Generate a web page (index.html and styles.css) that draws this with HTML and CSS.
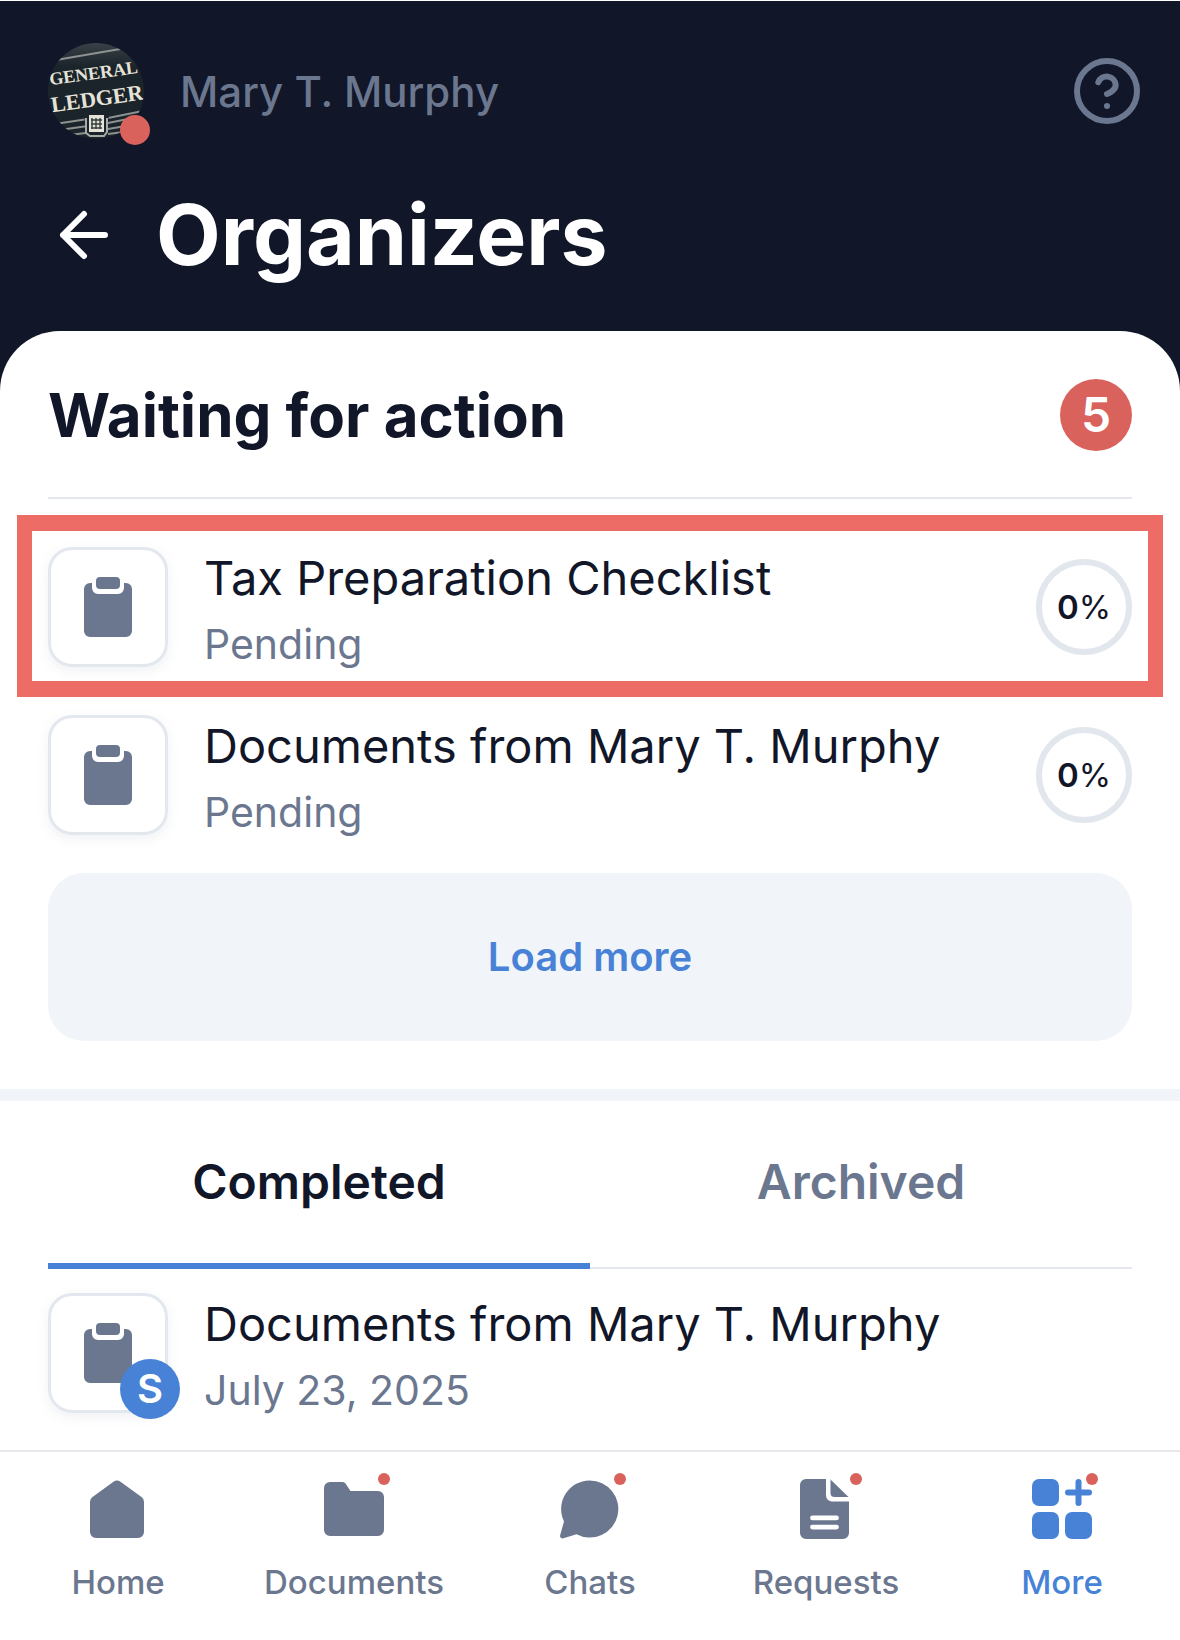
FILE: index.html
```html
<!DOCTYPE html>
<html lang="en">
  <head>
    <meta charset="utf-8">
    <meta name="viewport" content="width=device-width,initial-scale=1.0"/>
    <title>Organizers</title>
    <link rel="stylesheet" href="styles.css">
  </head>

  <body>
    <!-- shared icon -->
    <svg class="sprite" aria-hidden="true">
      <symbol id="clipboard" viewBox="0 0 60 60">
        <rect x="18" y="0" width="24" height="12" rx="4"/>
        <path d="M12 6h2v5a6 6 0 0 0 6 6h20a6 6 0 0 0 6-6V6h2a6 6 0 0 1 6 6v42a6 6 0 0 1-6 6H12a6 6 0 0 1-6-6V12a6 6 0 0 1 6-6z"/>
      </symbol>
    </svg>

    <header class="header">
      <div class="account">
        <div class="avatar">
          <svg viewBox="0 0 96 96" width="96" height="96" aria-hidden="true">
            <defs>
              <clipPath id="avatar-clip"><circle cx="48" cy="48" r="48"/></clipPath>
              <linearGradient id="avatar-bg" x1="0" y1="0" x2="0" y2="1">
                <stop offset="0" stop-color="#3a4148"/>
                <stop offset="0.25" stop-color="#1b242a"/>
                <stop offset="1" stop-color="#1a242b"/>
              </linearGradient>
            </defs>
            <g clip-path="url(#avatar-clip)">
              <rect width="96" height="96" fill="url(#avatar-bg)"/>
              <path d="M8 17 78 5M0 82l40-6M4 88l36-5M60 75l40-8M60 80l40-8M60 86l36-6M12 93l26-3M60 91l24-3" stroke="#8d9290" stroke-width="2"/>
              <g transform="rotate(-8 48 48)" class="avatar-text">
                <text x="48" y="36" font-size="18">GENERAL</text>
                <text x="48" y="63" font-size="22">LEDGER</text>
              </g>
              <path d="M36 72h25l-3 22H39z" fill="#1a242b"/>
              <path d="M38 75v15l4 3h14l3-4V75" fill="none" stroke="#a9aca6" stroke-width="2"/>
              <rect x="41" y="72" width="15" height="17" fill="#e5e3d8"/>
              <path d="M44 75v11M48 75v11M52 75v11M43 77h11M43 81h11M43 85h11" stroke="#353d40" stroke-width="1.4"/>
            </g>
          </svg>
          <span class="avatar-dot"></span>
        </div>
        <span class="account-name">Mary T. Murphy</span>
        <button class="icon-button help" aria-label="Help">
          <svg viewBox="1 1 22 22" width="66" height="66">
            <circle cx="12" cy="12" r="10"/>
            <path d="M9.1 9.1a3 3 0 0 1 5.8.9c0 2-2.9 3-2.9 3M12 17h.01"/>
          </svg>
        </button>
      </div>
      <div class="title-row">
        <button class="icon-button back" aria-label="Back">
          <svg viewBox="0 0 72 72" width="72" height="72">
            <path d="M57 36H15M36 15 15 36l21 21"/>
          </svg>
        </button>
        <h1>Organizers</h1>
      </div>
    </header>

    <main class="sheet">
      <section class="section waiting">
        <div class="section-head">
          <h2>Waiting for action</h2>
          <span class="count">5</span>
        </div>
        <ul class="list">
          <li class="item item-highlight">
            <span class="tile"><svg width="60" height="60"><use href="#clipboard"/></svg></span>
            <div class="item-text">
              <p class="item-title">Tax Preparation Checklist</p>
              <p class="item-sub">Pending</p>
            </div>
            <span class="progress"><b>0</b>%</span>
          </li>
          <li class="item">
            <span class="tile"><svg width="60" height="60"><use href="#clipboard"/></svg></span>
            <div class="item-text">
              <p class="item-title">Documents from Mary T. Murphy</p>
              <p class="item-sub">Pending</p>
            </div>
            <span class="progress"><b>0</b>%</span>
          </li>
        </ul>
        <button class="load-more">Load more</button>
      </section>

      <section class="section done">
        <div class="tabs" role="tablist">
          <button class="tab tab-active" role="tab" aria-selected="true">Completed</button>
          <button class="tab" role="tab" aria-selected="false">Archived</button>
        </div>
        <ul class="list">
          <li class="item">
            <span class="tile">
              <svg width="60" height="60"><use href="#clipboard"/></svg>
              <span class="tile-badge">S</span>
            </span>
            <div class="item-text">
              <p class="item-title">Documents from Mary T. Murphy</p>
              <p class="item-sub">July 23, 2025</p>
            </div>
          </li>
        </ul>
      </section>
    </main>

    <nav class="nav">
      <a class="nav-link" href="#home">
        <span class="nav-icon">
          <svg viewBox="0 0 60 60" width="60" height="60">
            <path d="M25.500 2.800a6 6 0 0 1 7 0L53.500 18a6 6 0 0 1 2.500 5v30a6 6 0 0 1-6 6H8a6 6 0 0 1-6-6V23a6 6 0 0 1 2.500-5z"/>
          </svg>
        </span>
        Home
      </a>
      <a class="nav-link" href="#documents">
        <span class="nav-icon nav-new">
          <svg viewBox="0 0 60 60" width="60" height="60">
            <path d="M6 3h13a3 3 0 0 1 2.500 1.500L26.500 12H54a6 6 0 0 1 6 6v33a6 6 0 0 1-6 6H6a6 6 0 0 1-6-6V9a6 6 0 0 1 6-6z"/>
          </svg>
        </span>
        Documents
      </a>
      <a class="nav-link" href="#chats">
        <span class="nav-icon nav-new">
          <svg viewBox="0 0 60 60" width="60" height="60">
            <path d="M29.500 1.500a28.500 28.500 0 1 1-13 53.700L3.500 59.300A2.600 2.600 0 0 1 .2 56L4 42.500A28.500 28.500 0 0 1 29.500 1.500z"/>
          </svg>
        </span>
        Chats
      </a>
      <a class="nav-link" href="#requests">
        <span class="nav-icon nav-new">
          <svg viewBox="0 0 60 60" width="60" height="60">
            <path fill-rule="evenodd" d="M10 0h20v16.500a6 6 0 0 0 6 6h17V54a6 6 0 0 1-6 6H10a6 6 0 0 1-6-6V6a6 6 0 0 1 6-6zM16.500 36.500a2.400 2.400 0 0 0 0 4.800h24a2.400 2.400 0 0 0 0-4.800zM16.500 45.700a2.400 2.400 0 0 0 0 4.800h24a2.400 2.400 0 0 0 0-4.800z"/>
            <path d="M34.500.500 52.500 18H38.500a4 4 0 0 1-4-4z"/>
          </svg>
        </span>
        Requests
      </a>
      <a class="nav-link nav-active" href="#more" aria-current="page">
        <span class="nav-icon nav-new">
          <svg viewBox="0 0 60 60" width="60" height="60">
            <rect x="0" y="0" width="27" height="27" rx="7"/>
            <rect x="0" y="33" width="27" height="27" rx="7"/>
            <rect x="33" y="33" width="27" height="27" rx="7"/>
            <path d="M46.500 3v21M36 13.500h21" stroke="currentColor" stroke-width="6" stroke-linecap="round"/>
          </svg>
        </span>
        More
      </a>
    </nav>
  </body>
</html>
```

FILE: styles.css
```css
* {
  box-sizing: border-box;
  margin: 0;
  padding: 0;
}
body {
  display: flex;
  flex-direction: column;
  min-height: 100vh;
  border-top: 1px solid white;
  background-color: #111628;
  color: #111628;
  font-family: Inter, 'Liberation Sans', sans-serif;
}
button {
  border: none;
  background: none;
  color: inherit;
  font-family: inherit;
  cursor: pointer;
}
ul {
  list-style: none;
}
svg {
  display: block;
}
.sprite {
  position: absolute;
  width: 0;
  height: 0;
}

/* Header */
.header {
  padding: 42px 40px 48px 48px;
}
.account {
  display: flex;
  align-items: center;
  margin-bottom: 48px;
}
.avatar {
  position: relative;
}
.avatar-text {
  font-family: 'Liberation Serif', serif;
  font-weight: bold;
  text-anchor: middle;
  fill: #e5e3d8;
}
.avatar-dot {
  position: absolute;
  right: -6px;
  bottom: -6px;
  width: 30px;
  height: 30px;
  border-radius: 50%;
  background-color: #d9625c;
}
.account-name {
  flex-grow: 1;
  margin-left: 36px;
  color: #6b778f;
  font-size: 42px;
  font-weight: 500;
}
.icon-button svg {
  fill: none;
  stroke: currentColor;
  stroke-linecap: round;
  stroke-linejoin: round;
}
.help {
  color: #6b778f;
  stroke-width: 2;
}
.back {
  color: white;
  stroke-width: 6;
}
.title-row {
  display: flex;
  align-items: center;
  gap: 36px;
  color: white;
}
h1 {
  font-size: 84px;
  font-weight: 700;
  line-height: 96px;
}

/* White sheet */
.sheet {
  flex-grow: 1;
  border-radius: 60px 60px 0 0;
  background-color: white;
}
.section {
  padding: 0 48px;
}
.waiting {
  padding-bottom: 48px;
  border-bottom: 12px solid #f1f4f9;
}
.section-head {
  display: flex;
  align-items: center;
  justify-content: space-between;
  margin-bottom: 48px;
  padding: 48px 0 46px;
  border-bottom: 2px solid #e4e7ee;
}
h2 {
  font-size: 60px;
  font-weight: 700;
  line-height: 72px;
}
.count {
  width: 72px;
  border-radius: 50%;
  background-color: #d9625c;
  color: white;
  font-size: 48px;
  font-weight: 600;
  line-height: 72px;
  text-align: center;
}

/* Organizer rows */
.list {
  display: flex;
  flex-direction: column;
  gap: 40px;
}
.item {
  position: relative;
  display: flex;
  align-items: flex-start;
  gap: 36px;
}
.item-highlight::after {
  content: '';
  position: absolute;
  inset: -32px -31px -22px;
  border: 16px solid #ed6d66;
  border-width: 16px 15px;
  pointer-events: none;
}
.tile {
  position: relative;
  display: flex;
  align-items: center;
  justify-content: center;
  flex-shrink: 0;
  width: 120px;
  height: 120px;
  border: 3px solid #e3e7ee;
  border-radius: 24px;
  box-shadow: 0 4px 12px rgba(107, 119, 143, 0.1);
}
.tile svg {
  fill: #6b778f;
}
.tile-badge {
  position: absolute;
  right: -15px;
  bottom: -9px;
  width: 60px;
  border-radius: 50%;
  background-color: #4782d6;
  color: white;
  font-size: 40px;
  font-weight: 600;
  line-height: 60px;
  text-align: center;
}
.item-text {
  flex-grow: 1;
}
.item-title {
  font-size: 47px;
  line-height: 62px;
}
.item-sub {
  margin-top: 4px;
  color: #6b778f;
  font-size: 41px;
  line-height: 62px;
}
.progress {
  display: flex;
  align-items: center;
  justify-content: center;
  width: 96px;
  height: 96px;
  margin-top: 12px;
  border: 6px solid #e2e7ee;
  border-radius: 50%;
  font-size: 33px;
}
.progress b {
  font-weight: 600;
}
.load-more {
  width: 100%;
  margin-top: 30px;
  border-radius: 36px;
  background-color: #f1f4f9;
  color: #4782d6;
  font-size: 40px;
  font-weight: 600;
  line-height: 168px;
}

/* Completed / Archived */
.tabs {
  display: flex;
  margin-bottom: 24px;
  box-shadow: inset 0 -2px #e4e7ee;
}
.tab {
  flex: 1;
  border-bottom: 6px solid transparent;
  color: #6b778f;
  font-size: 48px;
  font-weight: 600;
  line-height: 162px;
}
.tab-active {
  border-color: #4782d6;
  color: #111628;
}

/* Bottom nav */
.nav {
  display: grid;
  grid-template-columns: repeat(5, 1fr);
  padding: 27px 0 34px;
  border-top: 2px solid #e7e8eb;
  background-color: white;
}
.nav-link {
  display: flex;
  flex-direction: column;
  align-items: center;
  gap: 19px;
  color: #6b778f;
  font-size: 33px;
  font-weight: 500;
  line-height: 48px;
  text-decoration: none;
}
.nav-active {
  color: #4782d6;
}
.nav-icon {
  position: relative;
}
.nav-icon svg {
  fill: currentColor;
}
.nav-new::after {
  content: '';
  position: absolute;
  top: -6px;
  right: -6px;
  width: 12px;
  height: 12px;
  border-radius: 50%;
  background-color: #d9625c;
}
```
